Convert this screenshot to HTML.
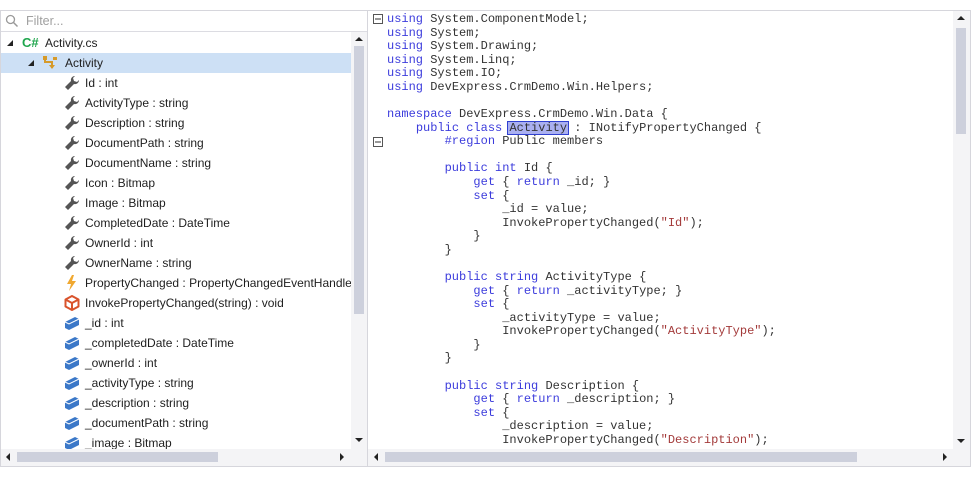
<!DOCTYPE html>
<html><head><meta charset="utf-8"><style>
*{margin:0;padding:0;box-sizing:border-box}
body{width:971px;height:477px;background:#fff;position:relative;overflow:hidden;font-family:"Liberation Sans",sans-serif}
.a{position:absolute}
.row{position:absolute;height:20px;line-height:20px;font-size:12px;color:#1e1e1e;white-space:nowrap}
.row span{top:0}
.ic{position:absolute;top:2px;width:16px;height:16px}
.code{position:absolute;left:387px;top:13px;font-family:"Liberation Mono",monospace;font-size:12px;line-height:13.58px;color:#333;white-space:pre}
.k{color:#3c3cdc}.s{color:#a33a3a}
.sb{background:#f4f4f6}
.th{background:#cdd0dc}
</style></head><body>
<div class="a" style="left:0;top:10px;width:971px;height:457px;border:1px solid #d6d6dc"></div>
<div class="a" style="left:367px;top:10px;width:1px;height:457px;background:#d6d6dc"></div>
<div class="a" style="left:1px;top:31px;width:366px;height:1px;background:#dcdce2"></div>
<svg class="a" style="left:5px;top:14px" width="14" height="14" viewBox="0 0 14 14"><circle cx="5.5" cy="5.5" r="4" fill="none" stroke="#999" stroke-width="1.3"/><path d="M8.5 8.5L12.5 12.5" stroke="#999" stroke-width="1.5"/></svg>
<div class="a" style="left:26px;top:13px;font-size:12.5px;color:#a0a0a0;line-height:16px">Filter...</div>
<div class="a" style="left:1px;top:53px;width:350px;height:20px;background:#cde0f5"></div>

<div class="row" style="left:0;top:33px;width:350px">
 <svg class="a" style="left:7px;top:7px" width="7" height="7"><path d="M6 0L6 6L0 6Z" fill="#222"/></svg>
 <span class="a" style="left:22px;color:#1fa64d;font-weight:bold;font-size:13px">C#</span>
 <span class="a" style="left:45px">Activity.cs</span></div>
<div class="row" style="left:0;top:53px;width:350px">
 <svg class="a" style="left:28px;top:7px" width="7" height="7"><path d="M6 0L6 6L0 6Z" fill="#222"/></svg>
 <svg class="ic" style="left:42px" viewBox="0 0 16 16"><path d="M3 2L3 7L10 7L10 13" fill="none" stroke="#d69a2a" stroke-width="2"/><rect x="1" y="1" width="4" height="4" fill="#d69a2a"/><path d="M7 10L10 14L13 10Z" fill="#d69a2a"/><rect x="11" y="2" width="4" height="3" fill="#d69a2a"/></svg>
 <span class="a" style="left:65px">Activity</span></div>

<div class="row" style="left:64px;top:73px"><svg class="ic" style="left:0" viewBox="0 0 16 16"><path d="M11 1a4 4 0 0 0-4 5L1 12l3 3 6-6a4 4 0 0 0 5-4l-2 2-3-1-1-3z" fill="#555"/></svg><span class="a" style="left:21px">Id : int</span></div>
<div class="row" style="left:64px;top:93px"><svg class="ic" style="left:0" viewBox="0 0 16 16"><path d="M11 1a4 4 0 0 0-4 5L1 12l3 3 6-6a4 4 0 0 0 5-4l-2 2-3-1-1-3z" fill="#555"/></svg><span class="a" style="left:21px">ActivityType : string</span></div>
<div class="row" style="left:64px;top:113px"><svg class="ic" style="left:0" viewBox="0 0 16 16"><path d="M11 1a4 4 0 0 0-4 5L1 12l3 3 6-6a4 4 0 0 0 5-4l-2 2-3-1-1-3z" fill="#555"/></svg><span class="a" style="left:21px">Description : string</span></div>
<div class="row" style="left:64px;top:133px"><svg class="ic" style="left:0" viewBox="0 0 16 16"><path d="M11 1a4 4 0 0 0-4 5L1 12l3 3 6-6a4 4 0 0 0 5-4l-2 2-3-1-1-3z" fill="#555"/></svg><span class="a" style="left:21px">DocumentPath : string</span></div>
<div class="row" style="left:64px;top:153px"><svg class="ic" style="left:0" viewBox="0 0 16 16"><path d="M11 1a4 4 0 0 0-4 5L1 12l3 3 6-6a4 4 0 0 0 5-4l-2 2-3-1-1-3z" fill="#555"/></svg><span class="a" style="left:21px">DocumentName : string</span></div>
<div class="row" style="left:64px;top:173px"><svg class="ic" style="left:0" viewBox="0 0 16 16"><path d="M11 1a4 4 0 0 0-4 5L1 12l3 3 6-6a4 4 0 0 0 5-4l-2 2-3-1-1-3z" fill="#555"/></svg><span class="a" style="left:21px">Icon : Bitmap</span></div>
<div class="row" style="left:64px;top:193px"><svg class="ic" style="left:0" viewBox="0 0 16 16"><path d="M11 1a4 4 0 0 0-4 5L1 12l3 3 6-6a4 4 0 0 0 5-4l-2 2-3-1-1-3z" fill="#555"/></svg><span class="a" style="left:21px">Image : Bitmap</span></div>
<div class="row" style="left:64px;top:213px"><svg class="ic" style="left:0" viewBox="0 0 16 16"><path d="M11 1a4 4 0 0 0-4 5L1 12l3 3 6-6a4 4 0 0 0 5-4l-2 2-3-1-1-3z" fill="#555"/></svg><span class="a" style="left:21px">CompletedDate : DateTime</span></div>
<div class="row" style="left:64px;top:233px"><svg class="ic" style="left:0" viewBox="0 0 16 16"><path d="M11 1a4 4 0 0 0-4 5L1 12l3 3 6-6a4 4 0 0 0 5-4l-2 2-3-1-1-3z" fill="#555"/></svg><span class="a" style="left:21px">OwnerId : int</span></div>
<div class="row" style="left:64px;top:253px"><svg class="ic" style="left:0" viewBox="0 0 16 16"><path d="M11 1a4 4 0 0 0-4 5L1 12l3 3 6-6a4 4 0 0 0 5-4l-2 2-3-1-1-3z" fill="#555"/></svg><span class="a" style="left:21px">OwnerName : string</span></div>
<div class="row" style="left:64px;top:273px;width:287px;overflow:hidden"><svg class="ic" style="left:0" viewBox="0 0 16 16"><path d="M8 0L3 9L7 9L5 16L12 6L8 6L10 0Z" fill="#f0a830"/></svg><span class="a" style="left:21px">PropertyChanged : PropertyChangedEventHandler</span></div>
<div class="row" style="left:64px;top:293px"><svg class="ic" style="left:0" viewBox="0 0 16 16"><path d="M8 1L14.5 4.5L14.5 11.5L8 15L1.5 11.5L1.5 4.5Z M1.5 4.5L8 8L14.5 4.5 M8 8L8 15" fill="none" stroke="#d9532c" stroke-width="2" stroke-linejoin="round"/></svg><span class="a" style="left:21px">InvokePropertyChanged(string) : void</span></div>
<div class="row" style="left:64px;top:313px"><svg class="ic" style="left:0" viewBox="0 0 16 16"><path d="M1 7L11 2L15 4L15 10L5 15L1 13Z" fill="#3b78c8"/><path d="M1 7L5 9L15 4" fill="none" stroke="#fff" stroke-width="1"/></svg><span class="a" style="left:21px">_id : int</span></div>
<div class="row" style="left:64px;top:333px"><svg class="ic" style="left:0" viewBox="0 0 16 16"><path d="M1 7L11 2L15 4L15 10L5 15L1 13Z" fill="#3b78c8"/><path d="M1 7L5 9L15 4" fill="none" stroke="#fff" stroke-width="1"/></svg><span class="a" style="left:21px">_completedDate : DateTime</span></div>
<div class="row" style="left:64px;top:353px"><svg class="ic" style="left:0" viewBox="0 0 16 16"><path d="M1 7L11 2L15 4L15 10L5 15L1 13Z" fill="#3b78c8"/><path d="M1 7L5 9L15 4" fill="none" stroke="#fff" stroke-width="1"/></svg><span class="a" style="left:21px">_ownerId : int</span></div>
<div class="row" style="left:64px;top:373px"><svg class="ic" style="left:0" viewBox="0 0 16 16"><path d="M1 7L11 2L15 4L15 10L5 15L1 13Z" fill="#3b78c8"/><path d="M1 7L5 9L15 4" fill="none" stroke="#fff" stroke-width="1"/></svg><span class="a" style="left:21px">_activityType : string</span></div>
<div class="row" style="left:64px;top:393px"><svg class="ic" style="left:0" viewBox="0 0 16 16"><path d="M1 7L11 2L15 4L15 10L5 15L1 13Z" fill="#3b78c8"/><path d="M1 7L5 9L15 4" fill="none" stroke="#fff" stroke-width="1"/></svg><span class="a" style="left:21px">_description : string</span></div>
<div class="row" style="left:64px;top:413px"><svg class="ic" style="left:0" viewBox="0 0 16 16"><path d="M1 7L11 2L15 4L15 10L5 15L1 13Z" fill="#3b78c8"/><path d="M1 7L5 9L15 4" fill="none" stroke="#fff" stroke-width="1"/></svg><span class="a" style="left:21px">_documentPath : string</span></div>
<div class="row" style="left:64px;top:433px"><svg class="ic" style="left:0" viewBox="0 0 16 16"><path d="M1 7L11 2L15 4L15 10L5 15L1 13Z" fill="#3b78c8"/><path d="M1 7L5 9L15 4" fill="none" stroke="#fff" stroke-width="1"/></svg><span class="a" style="left:21px">_image : Bitmap</span></div>

<div class="a sb" style="left:351px;top:32px;width:16px;height:417px"></div>
<div class="a th" style="left:354px;top:46px;width:10px;height:268px"></div>
<svg class="a" style="left:355px;top:37px" width="8" height="5"><path d="M0 4L4 0L8 4Z" fill="#222"/></svg>
<svg class="a" style="left:355px;top:438px" width="8" height="5"><path d="M0 0L8 0L4 4Z" fill="#222"/></svg>
<div class="a sb" style="left:1px;top:449px;width:366px;height:17px"></div>
<div class="a th" style="left:17px;top:452px;width:201px;height:10px"></div>
<svg class="a" style="left:6px;top:453px" width="5" height="8"><path d="M4 0L4 8L0 4Z" fill="#222"/></svg>
<svg class="a" style="left:340px;top:453px" width="5" height="8"><path d="M0 0L0 8L4 4Z" fill="#222"/></svg>

<svg class="a" style="left:373px;top:14px" width="10" height="10"><rect x="0.5" y="0.5" width="9" height="9" fill="#fff" stroke="#555"/><path d="M2 5H8" stroke="#333"/></svg>
<svg class="a" style="left:373px;top:137px" width="10" height="10"><rect x="0.5" y="0.5" width="9" height="9" fill="#fff" stroke="#555"/><path d="M2 5H8" stroke="#333"/></svg>
<div class="a" style="left:507px;top:121px;width:62px;height:14px;background:#aab0f0;border:1px solid #3040d0"></div>
<div class="code"><span class="k">using</span> System.ComponentModel;
<span class="k">using</span> System;
<span class="k">using</span> System.Drawing;
<span class="k">using</span> System.Linq;
<span class="k">using</span> System.IO;
<span class="k">using</span> DevExpress.CrmDemo.Win.Helpers;

<span class="k">namespace</span> DevExpress.CrmDemo.Win.Data {
    <span class="k">public</span> <span class="k">class</span> Activity : INotifyPropertyChanged {
        <span class="k">#region</span> Public members

        <span class="k">public</span> <span class="k">int</span> Id {
            <span class="k">get</span> { <span class="k">return</span> _id; }
            <span class="k">set</span> {
                _id = value;
                InvokePropertyChanged(<span class="s">"Id"</span>);
            }
        }

        <span class="k">public</span> <span class="k">string</span> ActivityType {
            <span class="k">get</span> { <span class="k">return</span> _activityType; }
            <span class="k">set</span> {
                _activityType = value;
                InvokePropertyChanged(<span class="s">"ActivityType"</span>);
            }
        }

        <span class="k">public</span> <span class="k">string</span> Description {
            <span class="k">get</span> { <span class="k">return</span> _description; }
            <span class="k">set</span> {
                _description = value;
                InvokePropertyChanged(<span class="s">"Description"</span>);</div>

<div class="a sb" style="left:953px;top:11px;width:17px;height:438px"></div>
<div class="a th" style="left:956px;top:28px;width:10px;height:106px"></div>
<svg class="a" style="left:957px;top:16px" width="8" height="5"><path d="M0 4L4 0L8 4Z" fill="#222"/></svg>
<svg class="a" style="left:957px;top:439px" width="8" height="5"><path d="M0 0L8 0L4 4Z" fill="#222"/></svg>
<div class="a sb" style="left:368px;top:449px;width:602px;height:17px"></div>
<div class="a th" style="left:385px;top:452px;width:472px;height:10px"></div>
<svg class="a" style="left:374px;top:453px" width="5" height="8"><path d="M4 0L4 8L0 4Z" fill="#222"/></svg>
<svg class="a" style="left:943px;top:453px" width="5" height="8"><path d="M0 0L0 8L4 4Z" fill="#222"/></svg>
<div class="a" style="left:0;top:466px;width:971px;height:1px;background:#d6d6dc"></div>
</body></html>
